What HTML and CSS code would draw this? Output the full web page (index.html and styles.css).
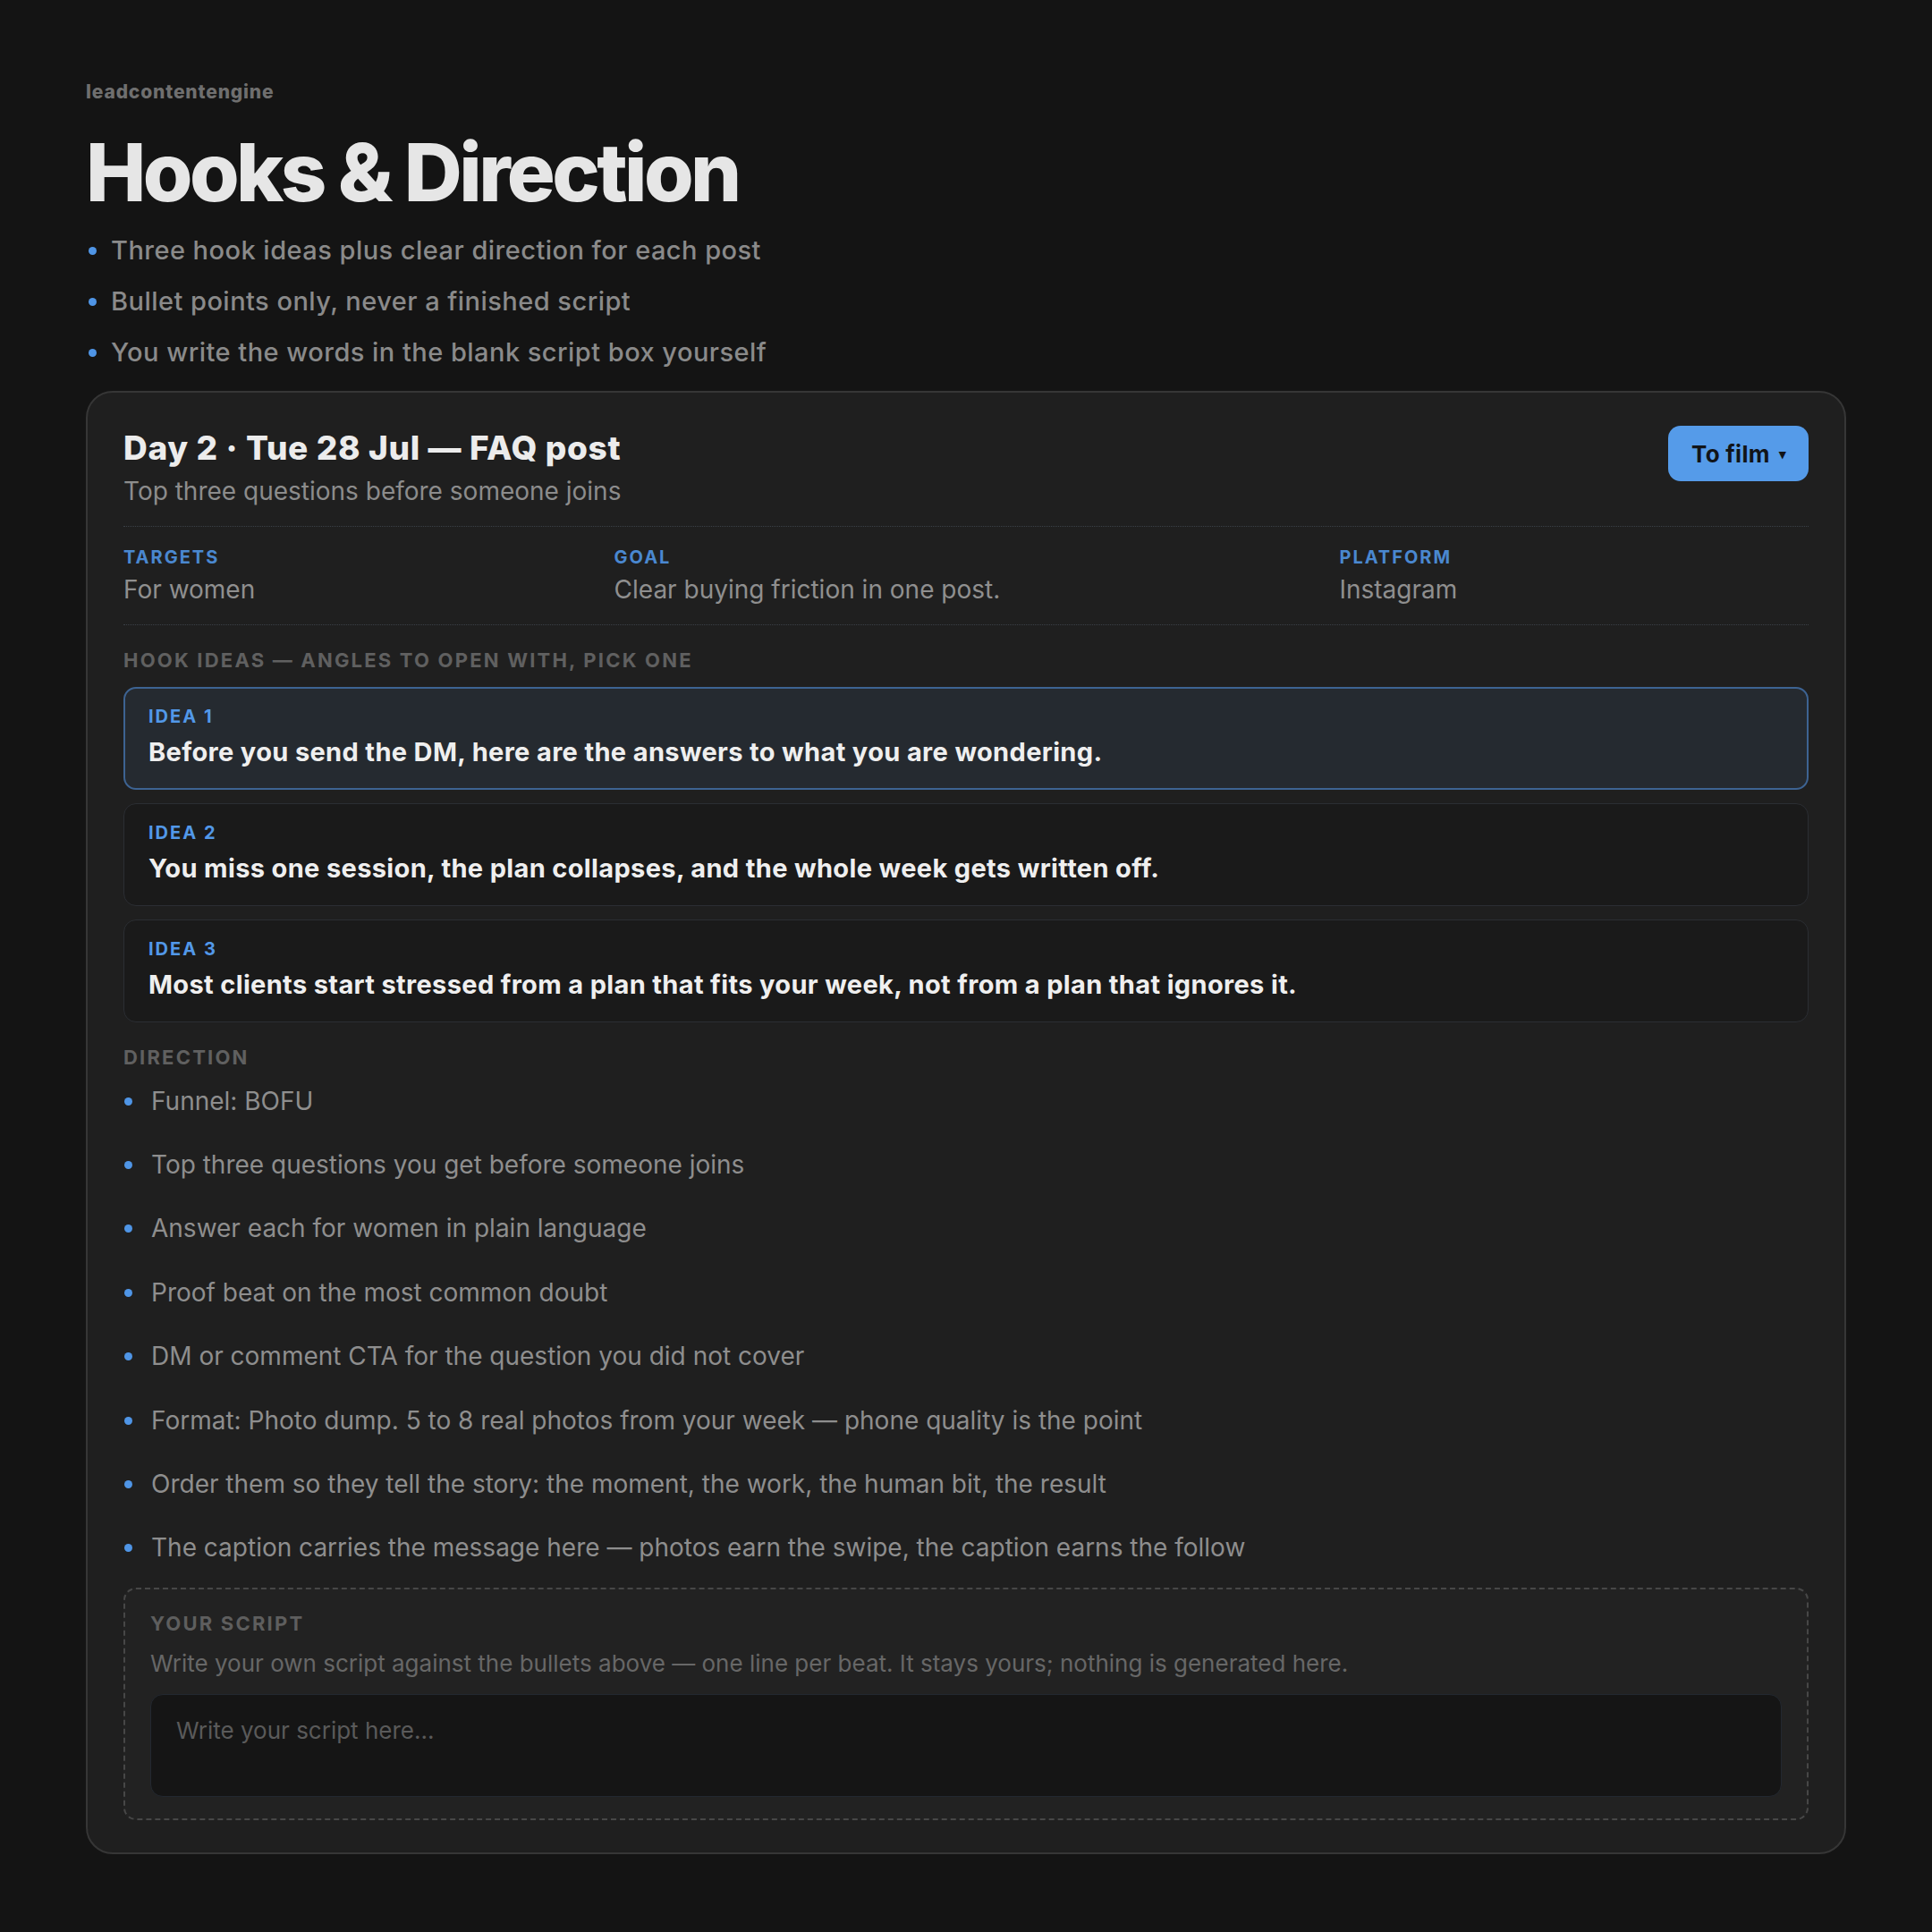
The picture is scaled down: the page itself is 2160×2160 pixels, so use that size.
FILE: index.html
```html
<!DOCTYPE html>
<html lang="en">
<head>
<meta charset="utf-8">
<title>Hooks &amp; Direction</title>
<link rel="stylesheet" href="styles.css">
</head>
<body>
<main class="page">
  <header class="intro">
    <div class="brand">leadcontentengine</div>
    <h1 class="title">Hooks &amp; Direction</h1>
    <ul class="intro-list">
      <li>Three hook ideas plus clear direction for each post</li>
      <li>Bullet points only, never a finished script</li>
      <li>You write the words in the blank script box yourself</li>
    </ul>
  </header>

  <section class="card">
    <div class="card-head">
      <div class="card-titles">
        <h2 class="card-title">Day 2 · Tue 28 Jul — FAQ post</h2>
        <p class="card-sub">Top three questions before someone joins</p>
      </div>
      <button class="status-btn" type="button">To film <span class="caret">▾</span></button>
    </div>

    <div class="meta">
      <div class="meta-item">
        <div class="meta-label">Targets</div>
        <div class="meta-value">For women</div>
      </div>
      <div class="meta-item">
        <div class="meta-label">Goal</div>
        <div class="meta-value">Clear buying friction in one post.</div>
      </div>
      <div class="meta-item">
        <div class="meta-label">Platform</div>
        <div class="meta-value">Instagram</div>
      </div>
    </div>

    <div class="section-label">Hook ideas — angles to open with, pick one</div>
    <div class="ideas">
      <div class="idea idea-selected">
        <div class="idea-label">Idea 1</div>
        <div class="idea-text">Before you send the DM, here are the answers to what you are wondering.</div>
      </div>
      <div class="idea">
        <div class="idea-label">Idea 2</div>
        <div class="idea-text">You miss one session, the plan collapses, and the whole week gets written off.</div>
      </div>
      <div class="idea">
        <div class="idea-label">Idea 3</div>
        <div class="idea-text">Most clients start stressed from a plan that fits your week, not from a plan that ignores it.</div>
      </div>
    </div>

    <div class="section-label section-direction">Direction</div>
    <ul class="direction">
      <li>Funnel: BOFU</li>
      <li>Top three questions you get before someone joins</li>
      <li>Answer each for women in plain language</li>
      <li>Proof beat on the most common doubt</li>
      <li>DM or comment CTA for the question you did not cover</li>
      <li>Format: Photo dump. 5 to 8 real photos from your week — phone quality is the point</li>
      <li>Order them so they tell the story: the moment, the work, the human bit, the result</li>
      <li>The caption carries the message here — photos earn the swipe, the caption earns the follow</li>
    </ul>

    <div class="script-box">
      <div class="script-label">Your script</div>
      <p class="script-hint">Write your own script against the bullets above — one line per beat. It stays yours; nothing is generated here.</p>
      <textarea class="script-input" placeholder="Write your script here..."></textarea>
    </div>
  </section>
</main>
</body>
</html>
```

FILE: styles.css
```css
* {
  box-sizing: border-box;
}

html, body {
  margin: 0;
  padding: 0;
  background: #141414;
}

body {
  font-family: Inter, "Noto Sans", "Liberation Sans", sans-serif;
  color: #e6e6e6;
}

.page {
  padding: 91px 96px 80px;
}

.brand {
  font-size: 21px;
  line-height: 24px;
  font-weight: 800;
  color: #6f6f6f;
  letter-spacing: 0.04em;
}

.title {
  margin: 28px 0 0;
  font-size: 90px;
  line-height: 99px;
  font-weight: 800;
  letter-spacing: -0.04em;
  color: #e6e6e6;
}

.intro-list {
  list-style: none;
  margin: 9px 0 0;
  padding: 0;
}

.intro-list li {
  position: relative;
  padding-left: 28px;
  font-size: 29px;
  line-height: 57px;
  font-weight: 500;
  letter-spacing: 0.016em;
  color: #8a8a8a;
}

.intro-list li::before,
.direction li::before {
  content: "";
  position: absolute;
  left: 3px;
  top: 50%;
  width: 9px;
  height: 9px;
  margin-top: -4px;
  border-radius: 50%;
  background: #4f95e6;
}

.card {
  margin-top: 15px;
  background: #1f1f1f;
  border: 2px solid #363636;
  border-radius: 30px;
  padding: 40px 40px 36px;
}

.card-head {
  display: flex;
  justify-content: space-between;
  align-items: flex-start;
  padding-bottom: 19.5px;
  border-bottom: 1px dotted #3b4047;
}

.card-title {
  margin: 0;
  font-size: 37px;
  line-height: 43px;
  font-weight: 800;
  letter-spacing: 0.018em;
  color: #ececec;
}

.card-sub {
  margin: 7.5px 0 0;
  font-size: 28px;
  line-height: 39px;
  font-weight: 400;
  color: #8c8c8c;
}

.status-btn {
  margin-top: -3px;
  height: 62px;
  padding: 0 25px 0 26px;
  border: none;
  border-radius: 14px;
  background: #559be9;
  color: #111418;
  font-family: Inter, "Noto Sans", sans-serif;
  font-size: 26px;
  font-weight: 700;
  letter-spacing: 0.01em;
  display: flex;
  align-items: center;
  gap: 10px;
}

.caret {
  font-size: 15px;
  line-height: 1;
}

.meta {
  display: grid;
  grid-template-columns: 1fr 1.5fr 1fr;
  gap: 24px;
  padding: 22px 0 19.5px;
  border-bottom: 1px dotted #3b4047;
}

.meta-label,
.idea-label,
.section-label,
.script-label {
  font-size: 20px;
  line-height: 24px;
  font-weight: 700;
  letter-spacing: 0.1em;
  text-transform: uppercase;
}

.meta-label {
  color: #4a88d0;
}

.meta-value {
  margin-top: 4.5px;
  font-size: 28px;
  line-height: 39px;
  color: #8f8f8f;
}

.section-label,
.script-label {
  font-size: 22px;
  line-height: 26px;
}

.section-label {
  margin-top: 26px;
  color: #606060;
}

.ideas {
  margin-top: 17px;
  display: flex;
  flex-direction: column;
  gap: 15px;
}

.idea {
  background: #1a1a1a;
  border: 1px solid #2b2e33;
  border-radius: 14px;
  padding: 20px 27px 22px;
}

.idea-selected {
  background: #252a30;
  border: 2px solid #3d6392;
  padding: 19px 26px 21px;
}

.idea-label {
  color: #5298e8;
}

.idea-text {
  margin-top: 8px;
  font-size: 29px;
  line-height: 39px;
  font-weight: 700;
  color: #efefef;
  letter-spacing: 0.012em;
}

.section-direction {
  margin-top: 26px;
}

.direction {
  list-style: none;
  margin: 0;
  padding: 0;
}

.direction li {
  position: relative;
  padding: 13.7px 0 13.7px 31px;
  font-size: 28px;
  line-height: 44px;
  color: #8e8e8e;
}

.direction li::before {
  left: 1px;
}

.script-box {
  margin-top: 9px;
  background: #222222;
  border: 2px dashed #474747;
  border-radius: 14px;
  padding: 25px 28px 24px;
}

.script-label {
  color: #5e5e5e;
}

.script-hint {
  margin: 12.5px 0 0;
  font-size: 26px;
  line-height: 37px;
  color: #676767;
}

.script-input {
  display: block;
  width: 100%;
  height: 115px;
  margin-top: 16.5px;
  padding: 20.5px 28px;
  background: #151515;
  border: 1px solid #232830;
  border-radius: 14px;
  resize: none;
  outline: none;
  font-family: Inter, "Noto Sans", sans-serif;
  font-size: 26px;
  line-height: 37px;
  color: #cfcfcf;
}

.script-input::placeholder {
  color: #5a5a5a;
}
```
